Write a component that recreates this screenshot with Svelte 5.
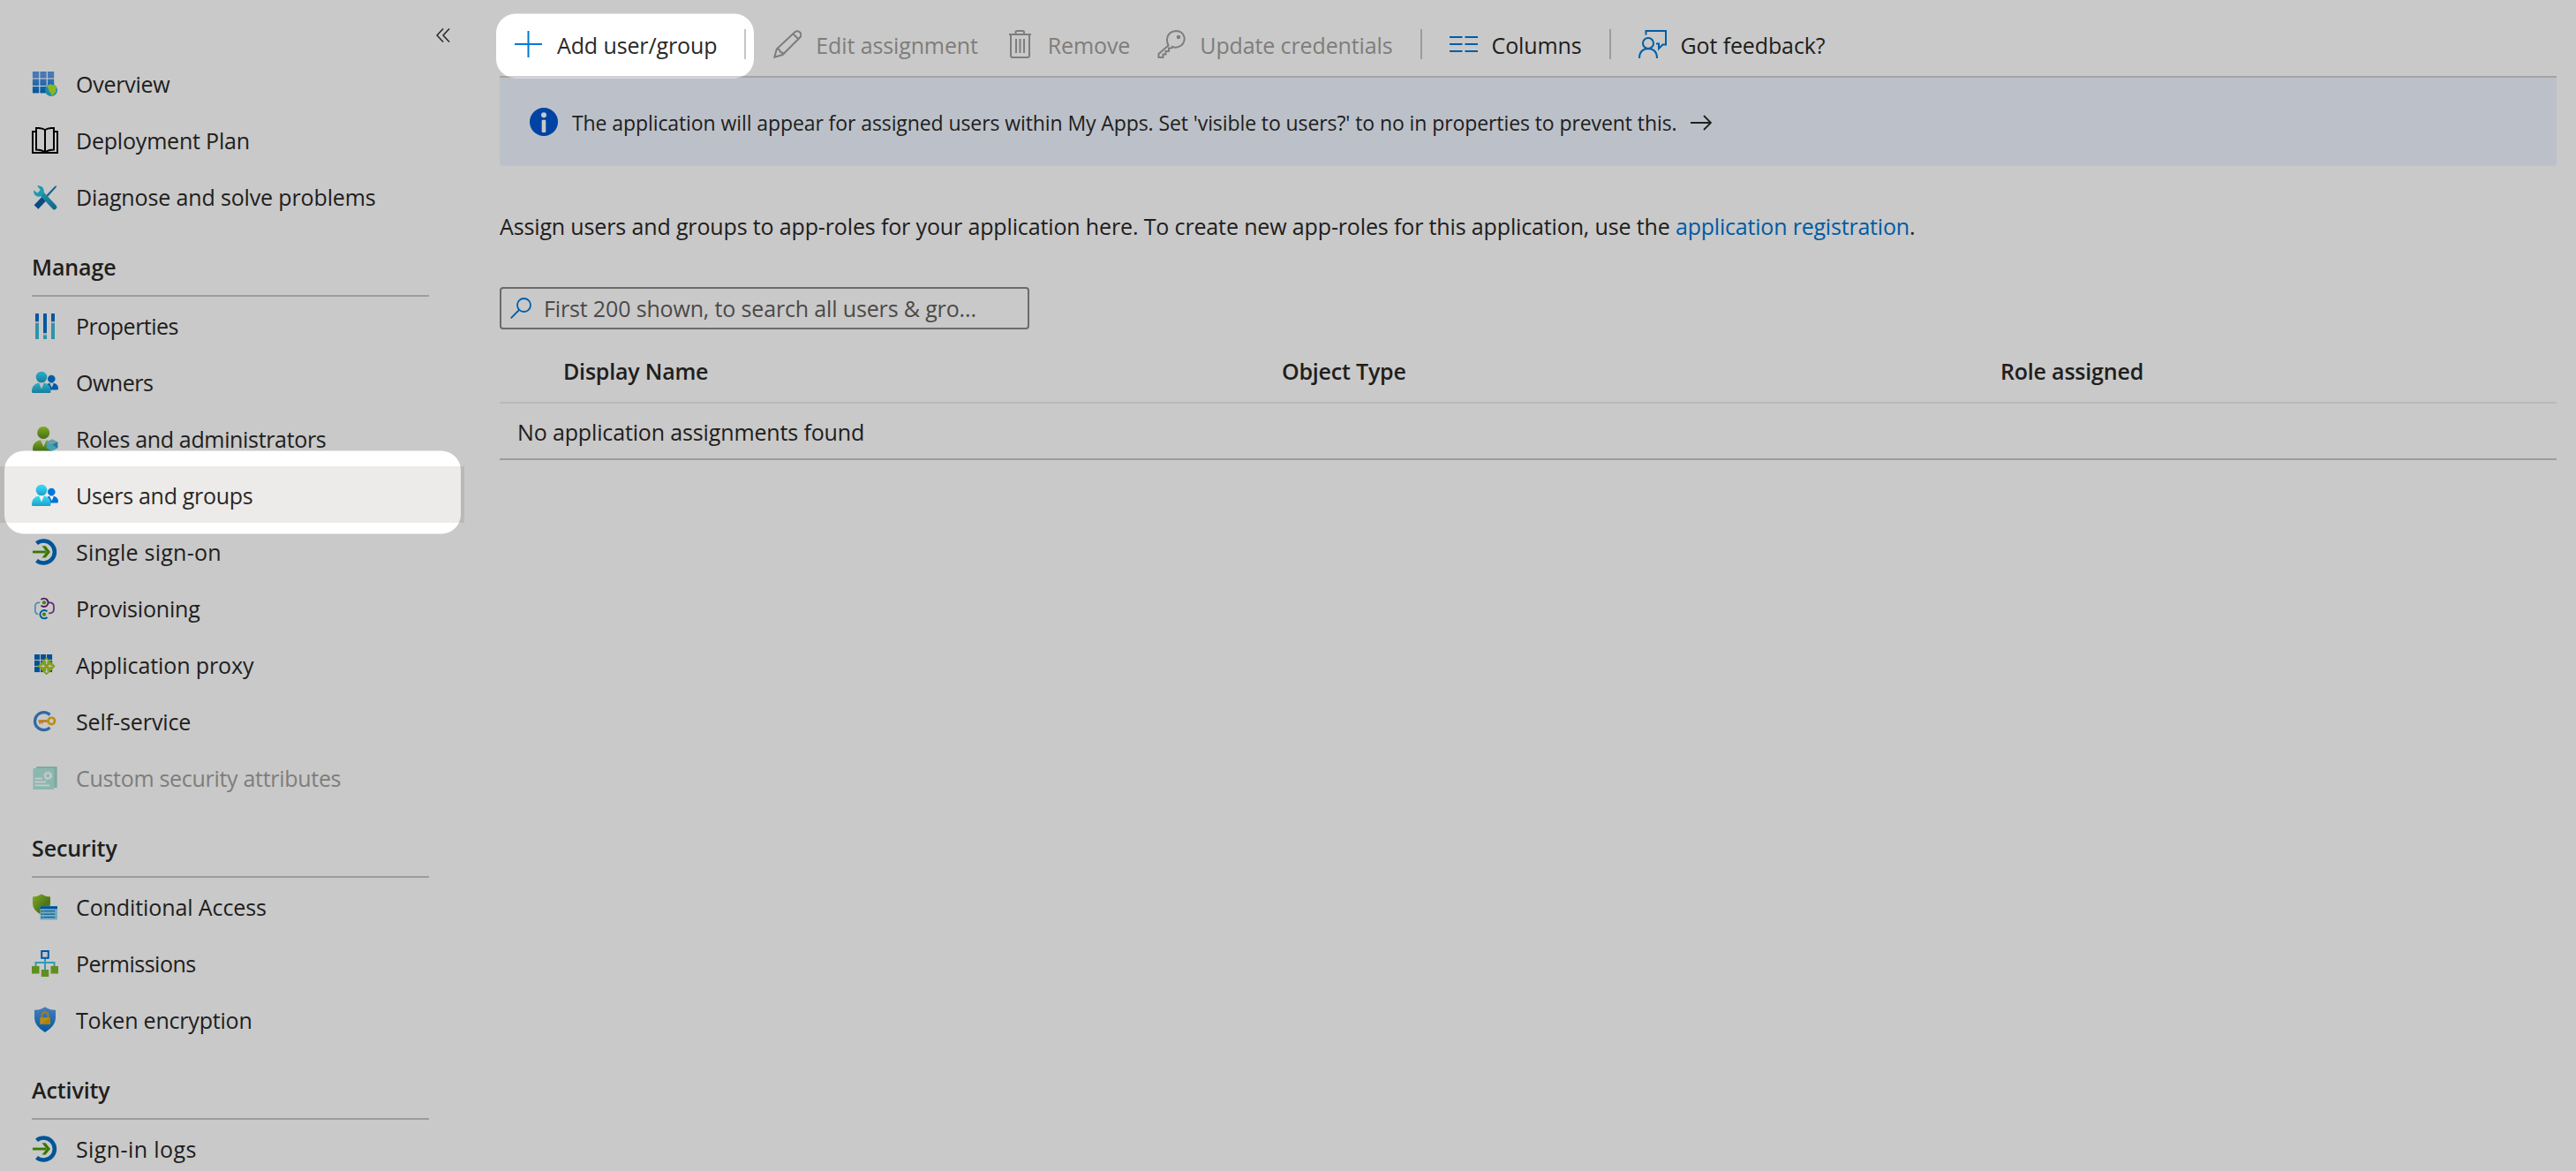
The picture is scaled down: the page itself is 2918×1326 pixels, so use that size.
<script>
	const sections = [
		{
			title: null,
			items: [
				{ label: 'Overview', icon: 'overview', track: -0.25 },
				{ label: 'Deployment Plan', icon: 'book', track: -0.2 },
				{ label: 'Diagnose and solve problems', icon: 'tools', track: -0.14 }
			]
		},
		{
			title: 'Manage',
			items: [
				{ label: 'Properties', icon: 'sliders', track: -0.5 },
				{ label: 'Owners', icon: 'people', track: -0.5 },
				{ label: 'Roles and administrators', icon: 'roles', track: -0.34 },
				{ label: 'Users and groups', icon: 'people', track: -0.3, selected: true },
				{ label: 'Single sign-on', icon: 'signin', track: 0.25 },
				{ label: 'Provisioning', icon: 'provisioning', track: -0.2 },
				{ label: 'Application proxy', icon: 'proxy', track: -0.1 },
				{ label: 'Self-service', icon: 'selfservice', track: -0.1 },
				{ label: 'Custom security attributes', icon: 'attributes', track: -0.3, disabled: true }
			]
		},
		{
			title: 'Security',
			items: [
				{ label: 'Conditional Access', icon: 'conditional', track: -0.1 },
				{ label: 'Permissions', icon: 'permissions', track: -0.5 },
				{ label: 'Token encryption', icon: 'token', track: -0.2 }
			]
		},
		{
			title: 'Activity',
			items: [{ label: 'Sign-in logs', icon: 'signin', track: 0.4 }]
		}
	];

	const commands = [
		{ label: 'Add user/group', icon: 'plus', divider: true },
		{ label: 'Edit assignment', icon: 'pencil', disabled: true },
		{ label: 'Remove', icon: 'trash', disabled: true },
		{ label: 'Update credentials', icon: 'key', disabled: true, divider: true },
		{ label: 'Columns', icon: 'columns', divider: true },
		{ label: 'Got feedback?', icon: 'feedback' }
	];

	const columns = ['Display Name', 'Object Type', 'Role assigned'];
	const cells = [0, 1, 2];
</script>

<!-- shared gradients -->
<svg class="defs" width="0" height="0">
	<defs>
		<linearGradient id="blue" x1="0" y1="0" x2="0" y2="1">
			<stop offset="0" stop-color="#5ea0ef" />
			<stop offset="1" stop-color="#0070cf" />
		</linearGradient>
		<linearGradient id="grid-blue" gradientUnits="userSpaceOnUse" x1="0" y1="0" x2="0" y2="25">
			<stop offset="0.2" stop-color="#5a9be8" />
			<stop offset="1" stop-color="#006fcd" />
		</linearGradient>
		<linearGradient id="teal" x1="0" y1="0" x2="0" y2="1">
			<stop offset="0.2" stop-color="#32d4f5" />
			<stop offset="1" stop-color="#1f9fc4" />
		</linearGradient>
		<linearGradient id="wrench" gradientUnits="userSpaceOnUse" x1="4" y1="4" x2="27" y2="28">
			<stop offset="0" stop-color="#30cdec" />
			<stop offset="1" stop-color="#1685ac" />
		</linearGradient>
		<linearGradient id="green" x1="0" y1="0" x2="0" y2="1">
			<stop offset="0" stop-color="#a0d92c" />
			<stop offset="1" stop-color="#588c1c" />
		</linearGradient>
		<linearGradient id="shield-green" x1="0" y1="0" x2="1" y2="1">
			<stop offset="0" stop-color="#a2d92f" />
			<stop offset="0.6" stop-color="#679620" />
		</linearGradient>
	</defs>
</svg>

{#snippet navIcon(name)}
	<svg class="nav-icon" viewBox="0 0 30 30">
		{#if name === 'overview'}
			{#each cells as r}
				{#each cells as c}
					<rect x={0.9 + c * 8.5} y={1 + r * 8.5} width="7.3" height="7.4" fill="url(#grid-blue)" />
				{/each}
			{/each}
			<circle cx="22" cy="22" r="7" fill="#28afd5" />
			<path d="M17 18q2-3 5-2.5l1.500 1 2.500-.5 2 3-1 3 .5 2-3.500 3.500-2 .5-.5-3-2-1.500-.5-3z" fill="#b0e92b" />
		{:else if name === 'book'}
			<g fill="none" stroke="#000" stroke-width="2">
				<path d="M5 5H1v24h28V5h-4" />
				<path d="M5 25.500V1h3q4 .3 7 2 3-1.700 7-2h3v24.500q-6 0-10 3-4-3-10-3zM15 3v25" />
			</g>
		{:else if name === 'tools'}
			<path d="M28.300 2l-2.500 1.200L16 13.500l1.800 1.600 9.500-10.500z" fill="#1a7fae" />
			<path d="M5 26.500l9-9.500" stroke="#0a5fa8" stroke-width="6.500" />
			<path d="M11 11l14.500 15.500" stroke="url(#wrench)" stroke-width="5.500" stroke-linecap="round" />
			<path d="M6 2.500c5-1.500 9 3 7.500 8l-4 4c-4 1-8-2-7.300-7l4.300 3 3.300-3.500z" fill="#2cc3e2" />
		{:else if name === 'sliders'}
			<path d="M4 10.500h4M13 24h4M22 10.500h4" stroke="#d8d8d8" stroke-width="3" />
			<path d="M6 1v9M15 1v22M24 1v9" stroke="#0070cd" stroke-width="4" />
			<path d="M6 12v18M15 25.500V30M24 12v18" stroke="#37bedb" stroke-width="4" />
		{:else if name === 'people'}
			<circle cx="22.300" cy="11" r="4.300" fill="#0078d7" />
			<path d="M15 23c0-5 3-7.500 7.500-7.500S30 18 30 22q0 1.500-1.500 1.500H16z" fill="#0074d3" />
			<path d="M20 15.700h5L22.700 21z" fill="#f4f4f4" />
			<path d="M0 25.500C0 19 4 15.300 11 15.300S21.500 19 21.500 25.500q0 1.500-1.500 1.500H1.500Q0 27 0 25.500z" fill="url(#teal)" />
			<path d="M8 15h6l-3 7.500z" fill="#f4f4f4" />
			<circle cx="11" cy="9" r="6.300" fill="url(#teal)" />
		{:else if name === 'roles'}
			<path d="M1 27c0-7 4-11 12-11s10 4 10 12.500H2.500Q1 28.500 1 27z" fill="url(#green)" />
			<path d="M9.500 15.500h7.500L13.300 24z" fill="#f4f4f4" />
			<circle cx="13.200" cy="8" r="7" fill="url(#green)" />
			<path d="M23 15.500l6.300 3v7l-6.300 3.300-6.300-3.300v-7z" fill="#55cce6" />
			<path d="M23 15.500l6.300 3-6.300 3-6.300-3z" fill="#8fc8d6" />
			<path d="M23 21.500l6.300-3v7z" fill="#2a9fc0" />
		{:else if name === 'signin'}
			<path d="M5.500 5.300A12.500 12.500 0 1 1 5.500 24.700" fill="none" stroke="#006cc0" stroke-width="4.600" />
			<path d="M1 15h15" stroke="#4a9800" stroke-width="2.800" />
			<path d="M11.500 8.300h4.200l5.300 6.700-5.300 6.500h-4.200l5.300-6.500z" fill="#4a9800" />
		{:else if name === 'provisioning'}
			<g fill="none" stroke-width="1.700">
				<path d="M9.300 8.300H8Q3.800 8.300 3.800 13v4q0 4 3.500 4.700" stroke="#5db5da" />
				<path d="M19 8.300h1.500q4.500 0 4.500 4.700v3q0 4.500-6 4.500" stroke="#7b3b98" />
				<path d="M10.500 5A4.700 4.700 0 1 1 10.500 11.600" stroke="#68217a" stroke-width="1.900" />
				<path d="M17.500 18.400A4.700 4.700 0 1 0 17.500 25" stroke="#0072c6" stroke-width="1.900" />
			</g>
			<circle cx="14" cy="8.300" r="2.100" fill="#55a60a" />
			<circle cx="14" cy="21.700" r="2.100" fill="#55a60a" />
		{:else if name === 'proxy'}
			{#each cells as r}
				{#each cells as c}
					<rect x={3 + c * 7} y={3 + r * 7} width="6.100" height="6.100" fill="#0068bd" />
				{/each}
			{/each}
			<rect x="9.500" y="9.200" width="14.300" height="14.300" rx="1" transform="rotate(45 16.650 16.350)" fill="#a3c91f" />
			<path d="M16.700 9.500v4.500M16.700 18.800v4.500M9.800 16.400h4.500M19 16.400h4.500" stroke="#f4f4f4" stroke-width="1.400" />
			<path d="M14.700 11l2-2.500 2 2.500zM14.700 21.700l2 2.500 2-2.500zM12.500 14.300l2.500 2-2.500 2zM20.900 14.300l-2.500 2 2.500 2z" fill="#f4f4f4" />
		{:else if name === 'selfservice'}
			<path d="M20.500 7.500A10 10 0 1 0 20.500 21.800" fill="none" stroke="#3c86d4" stroke-width="3.200" />
			<path d="M7.500 14.500H19" stroke="#f0a325" stroke-width="2.800" />
			<path d="M9.200 15v3M11.700 15v2.500" stroke="#ee8d3c" stroke-width="1.500" />
			<circle cx="22.300" cy="14.400" r="3.700" fill="none" stroke="#eab51c" stroke-width="2.600" />
		{:else if name === 'attributes'}
			<rect x="5" y="2" width="23.700" height="24" rx=".6" fill="#a1d8ce" />
			<rect x="1.500" y="4" width="23.800" height="24" rx=".6" fill="#afeadf" />
			<path d="M3.500 15.700H12M3.500 19.500H16M3.500 23.300H20" stroke="#fff" stroke-width="1.800" />
			<circle cx="18.300" cy="12.300" r="3" fill="none" stroke="#fff" stroke-width="1.800" />
			<circle cx="18.300" cy="12.300" r="4.400" fill="none" stroke="#fff" stroke-width="1.300" stroke-dasharray="1.700 1.756" />
		{:else if name === 'conditional'}
			<path d="M11 .5q4.500 3 10 3V11q0 8-10 13Q1 19 1 11V3.500q5.500 0 10-3z" fill="url(#shield-green)" />
			<path d="M9.500 14H29v15.500H9.500z" fill="#8fdcf2" />
			<path d="M9.500 15.700H29" stroke="#0069c0" stroke-width="3" />
			<path d="M13.300 19.700h13M13.300 23.200h13M13.300 26.700h13" stroke="#1b74c4" stroke-width="1.300" />
			<path d="M10.700 19.700h1.700M10.700 23.200h1.700M10.700 26.700h1.700" stroke="#1b5fa8" stroke-width="1.600" />
		{:else if name === 'permissions'}
			<path d="M15 9v14M4.500 18v-4h21v4" fill="none" stroke="#3cc6e6" stroke-width="2" />
			<rect x="11.200" y="1" width="7.600" height="7.800" fill="#f4f8ff" stroke="#0070cf" stroke-width="2" />
			<path d="M0 18h8.500v8.500H0zM10.800 22h8.400v8h-8.400zM21.500 18H30v8.500h-8.500z" fill="#7ab52a" />
		{:else if name === 'token'}
			<path d="M15 .3q5.500 3.500 12 3.500v9Q27 22 15 29 3 22 3 12.800v-9Q9.500 3.800 15 .3z" fill="url(#blue)" />
			<path d="M11.500 12.500V10a3.500 3.800 0 0 1 7 0v2.500" fill="none" stroke="#d9a016" stroke-width="2" />
			<rect x="9.300" y="12.300" width="11.500" height="7.700" rx=".8" fill="#eab61f" />
			<path d="M10 20l10.800-7.500V19q0 1-1 1z" fill="#e0a200" />
		{/if}
	</svg>
{/snippet}

{#snippet commandIcon(name)}
	<svg class="command-icon" viewBox="0 0 32 32" fill="none" stroke-width="2">
		{#if name === 'plus'}
			<path d="M0 16h31M15.500 1v30" />
		{:else if name === 'pencil'}
			<path d="M1.300 30.700L3.800 21.500 24.500 2.300Q27 .3 29.700 2.300 32.600 5 30.500 8L10.500 28z" />
			<path d="M3.800 21.500l3.200.8 1 2.700 2.500.8V28M22.500 4.500l6.500 6.200" />
		{:else if name === 'trash'}
			<path d="M4 5h25M11.500 5V2.500Q11.500 1 13 1h6.500Q21 1 21 2.500V5M6 5v24q0 2 2 2h17q2 0 2-2V5M12 10v16M16.500 10v16M21 10v16" />
		{:else if name === 'key'}
			<path d="M12.500 17.500L1.500 27v4h5v-3.500h3V24h3.500v-3.500h2.500q1.500-.5 1.500-1.500 5 2 10-1.500 4.500-4 3.500-9.500Q28.500 1 21 1q-9 1-10 9-.3 4 1.500 7.500z" />
			<circle cx="24" cy="8" r="1.300" />
		{:else if name === 'columns'}
			<path d="M0 8h14.500M17.500 8H32M0 16h14.500M17.500 16H32M0 24h14.500M17.500 24H32" />
		{:else if name === 'feedback'}
			<path d="M8.500 5.500V1H31v15.500h-3.500L23 21v-5.500h-3" />
			<circle cx="11" cy="15" r="6" />
			<path d="M1 32q0-10.500 10-11 10 .5 10 11" />
		{/if}
	</svg>
{/snippet}

<div class="page">
	<aside>
		<svg class="collapse" viewBox="0 0 16 16">
			<path d="M8 .5L1 8l7 7.500M15 .5L8 8l7 7.500" />
		</svg>
		<nav>
			{#each sections as section}
				{#if section.title}
					<h2>{section.title}</h2>
				{/if}
				{#each section.items as item}
					<div class="item" class:selected={item.selected} class:disabled={item.disabled}>
						{@render navIcon(item.icon)}
						<span style:letter-spacing="{item.track}px">{item.label}</span>
					</div>
				{/each}
			{/each}
		</nav>
	</aside>

	<main>
		<div class="toolbar">
			{#each commands as command}
				<div class="command" class:disabled={command.disabled}>
					{@render commandIcon(command.icon)}
					<span>{command.label}</span>
				</div>
				{#if command.divider}
					<i class="divider"></i>
				{/if}
			{/each}
		</div>

		<div class="banner">
			<svg class="info" viewBox="0 0 32 32">
				<circle cx="16" cy="16" r="16" fill="#0055d0" />
				<circle cx="16" cy="8.300" r="3" fill="#fff" />
				<rect x="13.700" y="13.700" width="4.600" height="14.300" rx="1" fill="#fff" />
			</svg>
			<span>The application will appear for assigned users within My Apps. Set 'visible to users?' to no in properties to prevent this.</span>
			<svg class="arrow" viewBox="0 0 24 18">
				<path d="M0 9h23M15 1l8 8-8 8" />
			</svg>
		</div>

		<p class="intro">
			Assign users and groups to app-roles for your application here. To create new app-roles for this application, use the <a href="#registration">application registration</a>.
		</p>

		<div class="search">
			<svg viewBox="0 0 24 24">
				<circle cx="15.500" cy="8.500" r="7.500" />
				<path d="M10 14L.7 23.300" />
			</svg>
			<span>First 200 shown, to search all users &amp; gro...</span>
		</div>

		<div class="table">
			<div class="head">
				{#each columns as column}
					<span>{column}</span>
				{/each}
			</div>
			<div class="empty">No application assignments found</div>
		</div>
	</main>

	<!-- dimmed backdrop with two spotlight cut-outs -->
	<svg class="backdrop" viewBox="0 0 2918 1326">
		<path
			fill-rule="evenodd"
			d="M0 0H2918V1326H0z
			M584 15.500H832a22 22 0 0 1 22 22V66.500a22 22 0 0 1-22 22H584a22 22 0 0 1-22-22V37.500a22 22 0 0 1 22-22z
			M27 510.500H500a22 22 0 0 1 22 22V582.500a22 22 0 0 1-22 22H27a22 22 0 0 1-22-22V532.500a22 22 0 0 1 22-22z"
		/>
	</svg>
</div>

<style>
	:global(body) {
		margin: 0;
		background: #fff;
	}

	.defs {
		position: absolute;
	}

	.page {
		position: relative;
		display: flex;
		width: 2918px;
		height: 1326px;
		overflow: hidden;
		background: #fff;
		color: #292827;
		font: 25px/36px "Segoe UI", "Open Sans", sans-serif;
	}

	aside {
		flex: none;
		width: 526px;
	}

	.collapse {
		display: block;
		width: 16px;
		height: 16px;
		margin: 32px 0 14px 494px;
		fill: none;
		stroke: #323130;
		stroke-width: 1.5;
	}

	h2 {
		box-sizing: border-box;
		width: 450px;
		height: 82px;
		margin: 0 0 0 36px;
		padding-top: 30px;
		border-bottom: 2px solid #c8c6c4;
		font-size: 25px;
		font-weight: 600;
		line-height: 36px;
		letter-spacing: -0.1px;
	}

	.item {
		display: flex;
		align-items: center;
		gap: 20px;
		box-sizing: border-box;
		height: 64px;
		padding: 2px 0 0 36px;
		white-space: nowrap;
	}

	.item.selected {
		background: #edebe9;
	}

	.item.disabled span {
		color: #a19f9d;
	}

	.nav-icon {
		flex: none;
		width: 30px;
		height: 30px;
	}

	main {
		width: 2330px;
		margin-left: 40px;
	}

	.toolbar {
		display: flex;
		align-items: center;
		gap: 31px;
		box-sizing: border-box;
		height: 88px;
		padding: 14px 0 0 17px;
		border-bottom: 2px solid #d2d0ce;
	}

	.command {
		display: flex;
		align-items: center;
		gap: 16px;
		white-space: nowrap;
	}

	.command span {
		padding-top: 2px;
		letter-spacing: -0.12px;
	}

	.command.disabled {
		color: #a19f9d;
	}

	.command-icon {
		flex: none;
		width: 32px;
		height: 32px;
		stroke: #0078d4;
	}

	.disabled .command-icon {
		stroke: #a19f9d;
	}

	.divider {
		width: 2px;
		height: 34px;
		background: #c8c6c4;
	}

	.banner {
		display: flex;
		align-items: center;
		height: 100px;
		padding-left: 34px;
		border-radius: 0 0 4px 4px;
		background: #eff5ff;
		font-size: 23px;
		white-space: nowrap;
	}

	.banner span {
		margin: 1px 16px 0;
		letter-spacing: -0.09px;
	}

	.info {
		width: 32px;
		height: 32px;
	}

	.arrow {
		width: 24px;
		height: 18px;
		margin-top: 2px;
		fill: none;
		stroke: #292827;
		stroke-width: 1.8;
	}

	.intro {
		margin: 50px 0 0;
		letter-spacing: -0.14px;
		white-space: nowrap;
	}

	a {
		color: #0074cf;
		letter-spacing: -0.2px;
		text-decoration: none;
	}

	.search {
		display: flex;
		align-items: center;
		gap: 14px;
		box-sizing: border-box;
		width: 600px;
		height: 48px;
		margin-top: 51px;
		padding-left: 10px;
		border: 2px solid #8a8886;
		border-radius: 4px;
		color: #605e5c;
		letter-spacing: -0.15px;
		white-space: nowrap;
	}

	.search svg {
		width: 24px;
		height: 24px;
		fill: none;
		stroke: #0078d4;
		stroke-width: 1.8;
	}

	.head {
		display: grid;
		grid-template-columns: 814px 814px 1fr;
		align-items: center;
		box-sizing: border-box;
		height: 84px;
		padding: 12px 0 0 72px;
		border-bottom: 2px solid #edebe9;
		font-weight: 600;
		letter-spacing: -0.2px;
	}

	.empty {
		box-sizing: border-box;
		height: 64px;
		padding: 14px 0 0 20px;
		border-bottom: 2px solid #c8c6c4;
		letter-spacing: -0.14px;
	}

	.backdrop {
		position: absolute;
		inset: 0;
		width: 2918px;
		height: 1326px;
		fill: rgba(0, 0, 0, 0.21);
		pointer-events: none;
	}
</style>
